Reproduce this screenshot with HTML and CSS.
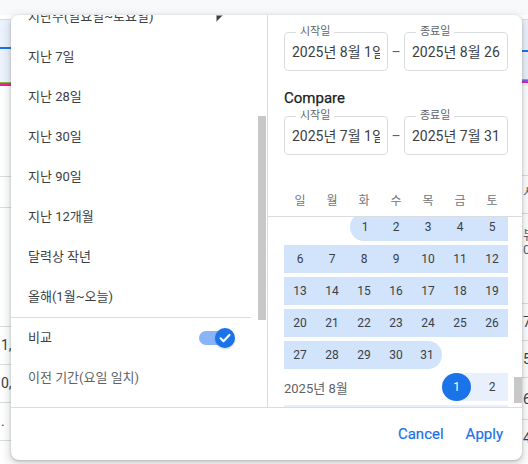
FILE: index.html
```html
<!DOCTYPE html>
<html lang="ko">
<head>
  <meta charset="UTF-8" />
  <title>기간 선택</title>
  <link rel="stylesheet" href="styles.css">
</head>
<body>

  <!-- Report page behind the popup -->
  <div class="topbar"></div>
  <div class="backdrop">
    <div class="side side-left">
      <div class="chart">
        <div class="series-main"></div>
        <div class="series-rest"><i class="s-green"></i><i class="s-red"></i><i class="s-pink"></i></div>
      </div>
      <div class="rule rule-a"></div>
      <div class="rule rule-b"></div>
      <div class="table-top"></div>
      <div class="cell-row">1,</div>
      <div class="cell-row">0,</div>
      <div class="cell-row">.</div>
    </div>
    <div class="side side-right">
      <div class="chart chart-right">
        <div class="series-main"></div>
        <div class="series-rest"><i class="s-orange"></i><i class="s-purple"></i><i class="s-pink"></i></div>
      </div>
      <div class="frag frag-gap"></div>
      <div class="frag frag-one">시</div>
      <div class="frag frag-two"><span>뷰</span><span>0</span></div>
      <div class="frag frag-num">7</div>
      <div class="frag frag-num">5</div>
      <div class="frag frag-num tall">6</div>
      <div class="frag frag-num last">4</div>
    </div>
  </div>

  <!-- Date range picker -->
  <div class="picker">
    <div class="picker-body">

      <!-- Preset list -->
      <div class="presets">
        <div class="presets-scroll">
          <ul class="preset-list">
            <li class="preset">지난주(일요일~토요일)</li>
            <li class="preset">지난 7일</li>
            <li class="preset">지난 28일</li>
            <li class="preset">지난 30일</li>
            <li class="preset">지난 90일</li>
            <li class="preset">지난 12개월</li>
            <li class="preset">달력상 작년</li>
            <li class="preset">올해(1월~오늘)</li>
            <li class="preset-divider"></li>
            <li class="preset compare-row">
              <span>비교</span>
              <span class="toggle">
                <span class="toggle-track"></span>
                <span class="toggle-thumb">
                  <svg width="20" height="20" viewBox="0 0 20 20"><path d="M5.6 10.3l2.9 2.9 5.9-6.3" fill="none" stroke="#fff" stroke-width="2.2" stroke-linecap="round" stroke-linejoin="round"/></svg>
                </span>
              </span>
            </li>
            <li class="preset preset-sub">이전 기간(요일 일치)</li>
          </ul>
        </div>
        <div class="scrollbar"><div class="thumb thumb-left"></div></div>
      </div>

      <!-- Range fields + calendar -->
      <div class="range">
        <div class="range-fields">
          <div class="field-row">
            <fieldset class="date-field"><legend>시작일</legend><div class="date-value">2025년 8월 1일</div></fieldset>
            <span class="dash">–</span>
            <fieldset class="date-field"><legend>종료일</legend><div class="date-value">2025년 8월 26일</div></fieldset>
          </div>
          <div class="compare-title">Compare</div>
          <div class="field-row">
            <fieldset class="date-field"><legend>시작일</legend><div class="date-value">2025년 7월 1일</div></fieldset>
            <span class="dash">–</span>
            <fieldset class="date-field"><legend>종료일</legend><div class="date-value">2025년 7월 31일</div></fieldset>
          </div>
        </div>

        <div class="weekdays">
          <span>일</span><span>월</span><span>화</span><span>수</span><span>목</span><span>금</span><span>토</span>
        </div>

        <div class="calendar">
          <div class="calendar-scroll">
            <div class="cal-grid">
              <div class="cal-row">
                <span class="day"></span><span class="day"></span>
                <span class="day in-range range-start">1</span>
                <span class="day in-range">2</span>
                <span class="day in-range">3</span>
                <span class="day in-range">4</span>
                <span class="day in-range">5</span>
              </div>
              <div class="cal-row in-range">
                <span class="day">6</span><span class="day">7</span><span class="day">8</span><span class="day">9</span><span class="day">10</span><span class="day">11</span><span class="day">12</span>
              </div>
              <div class="cal-row in-range">
                <span class="day">13</span><span class="day">14</span><span class="day">15</span><span class="day">16</span><span class="day">17</span><span class="day">18</span><span class="day">19</span>
              </div>
              <div class="cal-row in-range">
                <span class="day">20</span><span class="day">21</span><span class="day">22</span><span class="day">23</span><span class="day">24</span><span class="day">25</span><span class="day">26</span>
              </div>
              <div class="cal-row">
                <span class="day in-range">27</span>
                <span class="day in-range">28</span>
                <span class="day in-range">29</span>
                <span class="day in-range">30</span>
                <span class="day in-range range-end">31</span>
              </div>
              <div class="cal-row">
                <span class="month-label">2025년 8월</span>
                <span class="day selected"><b>1</b></span>
                <span class="day main-range">2</span>
              </div>
              <div class="cal-row main-range">
                <span class="day">3</span><span class="day">4</span><span class="day">5</span><span class="day">6</span><span class="day">7</span><span class="day">8</span><span class="day">9</span>
              </div>
            </div>
          </div>
          <div class="scrollbar scrollbar-cal"><div class="thumb thumb-cal"></div></div>
        </div>
      </div>
    </div>

    <div class="picker-actions">
      <button class="text-btn">Cancel</button>
      <button class="text-btn">Apply</button>
    </div>
  </div>

  <!-- mouse pointer tip -->
  <svg class="pointer" width="8" height="8" viewBox="0 0 8 8"><polygon points="0.5,0.5 6.5,0.5 0.5,6.5" fill="#3c4043" stroke="#9aa0a6" stroke-width="0.6"/></svg>

</body>
</html>
```

FILE: styles.css
```css
/* Page */
body {
  margin: 0;
  height: 464px;
  overflow: hidden;
  background: #fff;
  font-family: Roboto, "Noto Sans CJK KR", sans-serif;
  color: #3c4043;
}

/* Report page peeking out behind the popup */
.topbar {
  height: 15px;
  background: #f8f9fa;
}

.backdrop {
  display: flex;
  justify-content: space-between;
}

.side-left {
  width: 11px;
  overflow: hidden;
}

.side-right {
  width: 6px;
  overflow: hidden;
}

.chart {
  margin-top: 4px;
  height: 67px;
  background: #edf3fc;
  border-top: 1px solid #dadce0;
  box-sizing: border-box;
}

.series-main {
  margin-top: 27px;
  height: 2px;
  background: #1a73e8;
}

.series-rest {
  margin-top: 33px;
}

.series-rest i {
  display: block;
  height: 1px;
}

.s-green { background: #8bb54a; }
.s-red { background: #e8453c; }
.s-pink { background: #e52592; height: 2px !important; }
.s-orange { background: #f29900; }
.s-purple { background: #7b61ff; }

.chart-right .series-main { margin-top: 30px; }
.chart-right .series-rest { margin-top: 27px; }

.rule {
  border-bottom: 1px solid #dadce0;
}

.rule-a { height: 90px; }
.rule-b { height: 30px; }

.table-top {
  height: 118px;
  border-bottom: 1px solid #dadce0;
}

.cell-row {
  height: 37px;
  line-height: 37px;
  border-bottom: 1px solid #dadce0;
  font-size: 14px;
  padding-left: 1px;
}

.frag {
  border-bottom: 1px solid #dadce0;
  font-size: 13px;
  padding-left: 1px;
  color: #5f6368;
  box-sizing: border-box;
}

.frag-gap { height: 90px; }
.frag-one { height: 38px; line-height: 32px; }
.frag-two { height: 90px; padding-top: 13px; }
.frag-two span { display: block; line-height: 15px; }
.frag-num { height: 37px; line-height: 37px; font-size: 14px; color: #3c4043; }
.frag-num.tall { height: 42px; line-height: 42px; }
.frag-num.last { border-bottom: none; }

/* Popup card */
.picker {
  position: absolute;
  left: 11px;
  top: 15px;
  width: 511px;
  height: 445px;
  background: #fff;
  border-radius: 8px;
  overflow: hidden;
  box-shadow: 0 1px 3px rgba(60, 64, 67, 0.3), 0 4px 8px 3px rgba(60, 64, 67, 0.15);
  display: flex;
  flex-direction: column;
}

.picker-body {
  display: flex;
  height: 392px;
  border-bottom: 1px solid #dadce0;
}

/* Left: presets */
.presets {
  display: flex;
  width: 257px;
  border-right: 1px solid #dadce0;
}

.presets-scroll {
  width: 246px;
  overflow: hidden;
}

.preset-list {
  list-style: none;
  margin: -18px 0 0;
  padding: 0;
}

.preset {
  height: 40px;
  line-height: 40px;
  padding-left: 17px;
  font-size: 13px;
  color: #3c4043;
  white-space: nowrap;
}

.preset-divider {
  height: 1px;
  margin-right: 6px;
  background: #dadce0;
}

.compare-row {
  display: flex;
  align-items: center;
  justify-content: space-between;
  padding-right: 22px;
}

.preset-sub {
  color: #5f6368;
}

/* Switch */
.toggle {
  display: flex;
  align-items: center;
}

.toggle-track {
  width: 32px;
  height: 14px;
  border-radius: 7px;
  background: #8ab4f8;
}

.toggle-thumb {
  display: flex;
  width: 20px;
  height: 20px;
  margin-left: -16px;
  border-radius: 50%;
  background: #1a73e8;
  box-shadow: 0 1px 2px rgba(60, 64, 67, 0.3);
}

/* Fake scrollbars */
.scrollbar {
  width: 10px;
}

.thumb {
  width: 8px;
  margin-left: 1px;
  background: #c8c8c8;
}

.thumb-left {
  margin-top: 101px;
  height: 204px;
}

.scrollbar-cal {
  width: 8px;
}

.thumb-cal {
  margin: 160px 0 0;
  height: 26px;
}

/* Right: range */
.range {
  width: 254px;
  display: flex;
  flex-direction: column;
}

.range-fields {
  padding: 10px 0 0 16px;
}

.field-row {
  display: flex;
  width: 224px;
}

.date-field {
  width: 104px;
  box-sizing: border-box;
  min-width: 0;
  margin: 0;
  padding: 0 7px;
  border: 1px solid #dadce0;
  border-radius: 4px;
}

.date-field legend {
  margin-left: 4px;
  padding: 0 4px;
  font-size: 11px;
  line-height: 14px;
  color: #5f6368;
}

.date-value {
  padding: 3px 0 8px;
  font-size: 14px;
  line-height: 20px;
  white-space: nowrap;
  overflow: hidden;
  color: #3c4043;
}

.dash {
  width: 16px;
  text-align: center;
  align-self: center;
  margin-top: 8px;
  font-size: 14px;
  color: #5f6368;
}

.compare-title {
  margin-top: 17px;
  margin-bottom: 1px;
  font-size: 15px;
  line-height: 20px;
  color: #202124;
  -webkit-text-stroke: 0.25px #202124;
}

.weekdays {
  display: grid;
  grid-template-columns: repeat(7, 32px);
  margin-top: 31px;
  padding-left: 16px;
  height: 30px;
  line-height: 30px;
  border-bottom: 1px solid #dadce0;
  font-size: 12px;
  color: #70757a;
  text-align: center;
}

/* Month grid */
.calendar {
  display: flex;
  height: 190px;
}

.calendar-scroll {
  width: 246px;
  overflow: hidden;
}

.cal-grid {
  margin-top: -4px;
  padding-left: 16px;
}

.cal-row {
  display: grid;
  grid-template-columns: repeat(7, 32px);
  width: 224px;
  height: 28px;
  margin-bottom: 4px;
}

.cal-row.in-range {
  background: #d2e3fc;
}

.cal-row.main-range {
  background: #e8f0fe;
}

.day {
  display: flex;
  align-items: center;
  justify-content: center;
  font-size: 12px;
  color: #3c4043;
}

.day.in-range {
  background: #d2e3fc;
}

.day.range-start {
  margin-left: 2px;
  border-radius: 14px 0 0 14px;
}

.day.range-end {
  margin-right: 2px;
  border-radius: 0 14px 14px 0;
}

.day.main-range {
  background: #e8f0fe;
}

.month-label {
  grid-column: span 5;
  display: flex;
  align-items: center;
  font-size: 13px;
  color: #5f6368;
}

.day.selected {
  justify-content: flex-start;
  background: linear-gradient(to right, transparent 13px, #e8f0fe 13px);
}

.day.selected b {
  display: flex;
  align-items: center;
  justify-content: center;
  width: 29px;
  height: 28px;
  margin-left: -2px;
  border-radius: 50%;
  background: #1a73e8;
  color: #fff;
  font-weight: 400;
}

/* Footer */
.picker-actions {
  display: flex;
  flex: 1;
  align-items: center;
  justify-content: flex-end;
  gap: 6px;
  padding-right: 11px;
}

.text-btn {
  height: 36px;
  padding: 0 8px;
  border: none;
  background: none;
  font-family: Roboto, sans-serif;
  font-size: 15px;
  font-weight: 400;
  color: #1a73e8;
  -webkit-text-stroke: 0.2px #1a73e8;
  cursor: pointer;
}

/* Mouse pointer over the list */
.pointer {
  position: absolute;
  left: 216px;
  top: 15px;
}
```
